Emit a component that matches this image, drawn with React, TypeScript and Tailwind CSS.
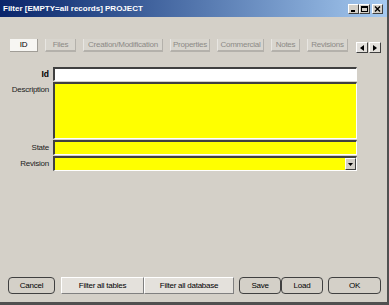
import React from "react";

const tabs: { label: string; w: number; active?: boolean }[] = [
  { label: "ID", w: 28, active: true },
  { label: "Files", w: 31 },
  { label: "Creation/Modification", w: 80 },
  { label: "Properties", w: 40 },
  { label: "Commercial", w: 47 },
  { label: "Notes", w: 29 },
  { label: "Revisions", w: 41 },
];

function TitleBtn({ kind }: { kind: "min" | "max" | "close" }) {
  return (
    <div className="w-[11px] h-[10px] bg-[#d4d0c8] border-t border-l border-t-white border-l-white border-b border-r border-b-[#404040] border-r-[#404040] flex items-center justify-center">
      <svg width="7" height="6" viewBox="0 0 7 6">
        {kind === "min" && <rect x="1" y="4" width="4" height="2" fill="#000" />}
        {kind === "max" && (
          <>
            <rect x="0.5" y="0.5" width="6" height="5" fill="none" stroke="#000" />
            <rect x="0" y="0" width="7" height="2" fill="#000" />
          </>
        )}
        {kind === "close" && (
          <path d="M1 0.5 L6 5.5 M6 0.5 L1 5.5" stroke="#000" strokeWidth="1.4" />
        )}
      </svg>
    </div>
  );
}

function Field({ h, bg, children }: { h: number; bg: string; children?: React.ReactNode }) {
  return (
    <div
      className={`relative w-[304px] ${bg} border-t-2 border-l-2 border-t-[#404040] border-l-[#404040] border-b border-r border-b-white border-r-white`}
      style={{ height: h }}
    >
      {children}
    </div>
  );
}

function RoundBtn({ label, w, cls = "" }: { label: string; w: number; cls?: string }) {
  return (
    <div
      className={`h-[17px] flex items-center justify-center border border-[#404040] rounded-[4px] bg-[#d4d0c8] text-black ${cls}`}
      style={{ width: w }}
    >
      {label}
    </div>
  );
}

function FlatBtn({ label, w, cls = "" }: { label: string; w: number; cls?: string }) {
  return (
    <div
      className={`h-[17px] flex items-center justify-center bg-[#e4e1dc] border-t border-l border-t-white border-l-white border-b border-r border-b-[#808080] border-r-[#808080] text-black ${cls}`}
      style={{ width: w }}
    >
      {label}
    </div>
  );
}

export default function App() {
  return (
    <div
      className="w-[389px] h-[305px] bg-[#d4d0c8] flex flex-col overflow-hidden border-r-2 border-b-[3px] border-r-[#505050] border-b-[#505050] text-[8px] tracking-[-0.25px] leading-none"
      style={{ fontFamily: '"Liberation Sans", Arial, sans-serif' }}
    >
      {/* Title bar */}
      <div className="h-[17px] shrink-0 flex items-center pl-[3px] pr-[4px] bg-gradient-to-r from-[#0a246a] to-[#a6caf0]">
        <span className="text-white font-bold text-[8px] tracking-normal">Filter [EMPTY=all records] PROJECT</span>
        <div className="ml-auto flex items-center">
          <TitleBtn kind="min" />
          <TitleBtn kind="max" />
          <div className="w-[2px]" />
          <TitleBtn kind="close" />
        </div>
      </div>

      {/* Tabs */}
      <div className="flex items-start mt-[22px] pl-[10px] h-[15px]">
        {tabs.map((t, i) => (
          <div
            key={t.label}
            className={`h-[13px] flex items-center justify-center whitespace-nowrap ${
              t.active
                ? "bg-[#f7f6f3] text-black border-b border-r border-b-[#a09d97] border-r-[#a09d97]"
                : "bg-[#d8d5ce] text-[#8c8a86] border-b-2 border-r border-b-[#b4b1ab] border-r-[#b4b1ab] border-l border-l-[#e8e6e2]"
            }`}
            style={{ width: t.w, marginLeft: i === 0 ? 0 : 7 }}
          >
            {t.label}
          </div>
        ))}
        <div className="ml-[8px] mt-[3px] flex">
          <div className="w-[12px] h-[11px] bg-[#e4e1dc] border-t border-l border-t-white border-l-white border-b border-r border-b-[#404040] border-r-[#404040] flex items-center justify-center">
            <svg width="4" height="6" viewBox="0 0 4 6"><path d="M4 0 L0 3 L4 6 Z" fill="#000" /></svg>
          </div>
          <div className="ml-[1px] w-[12px] h-[11px] bg-[#e4e1dc] border-t border-l border-t-white border-l-white border-b border-r border-b-[#404040] border-r-[#404040] flex items-center justify-center">
            <svg width="4" height="6" viewBox="0 0 4 6"><path d="M0 0 L4 3 L0 6 Z" fill="#000" /></svg>
          </div>
        </div>
      </div>

      {/* Form */}
      <div className="mt-[13px] flex flex-col gap-[1px] pl-[4px]">
        <div className="flex items-center">
          <div className="w-[45px] text-right font-bold text-black text-[8.5px] tracking-normal">Id</div>
          <div className="ml-[4px]">
            <Field h={14} bg="bg-white" />
          </div>
        </div>
        <div className="flex items-start">
          <div className="w-[45px] text-right text-[#222] pt-[4px] whitespace-nowrap">Description</div>
          <div className="ml-[4px]">
            <Field h={57} bg="bg-[#ffff00]" />
          </div>
        </div>
        <div className="flex items-center">
          <div className="w-[45px] text-right text-[#222]">State</div>
          <div className="ml-[4px]">
            <Field h={15} bg="bg-[#ffff00]" />
          </div>
        </div>
        <div className="flex items-center">
          <div className="w-[45px] text-right text-[#222]">Revision</div>
          <div className="ml-[4px]">
            <Field h={15} bg="bg-[#ffff00]">
              <div className="absolute right-0 top-0 w-[11px] h-[12px] bg-[#d4d0c8] border-t border-l border-t-white border-l-white border-b border-r border-b-[#404040] border-r-[#404040] flex items-center justify-center">
                <svg width="5" height="3" viewBox="0 0 5 3"><path d="M0 0 H5 L2.5 3 Z" fill="#000" /></svg>
              </div>
            </Field>
          </div>
        </div>
      </div>

      {/* Buttons */}
      <div className="mt-auto mb-[8px] flex items-center pl-[8px]">
        <RoundBtn label="Cancel" w={47} />
        <FlatBtn label="Filter all tables" w={83} cls="ml-[6px]" />
        <FlatBtn label="Filter all database" w={90} />
        <RoundBtn label="Save" w={42} cls="ml-[5px]" />
        <RoundBtn label="Load" w={42} />
        <RoundBtn label="OK" w={53} cls="ml-[5px]" />
      </div>
    </div>
  );
}
